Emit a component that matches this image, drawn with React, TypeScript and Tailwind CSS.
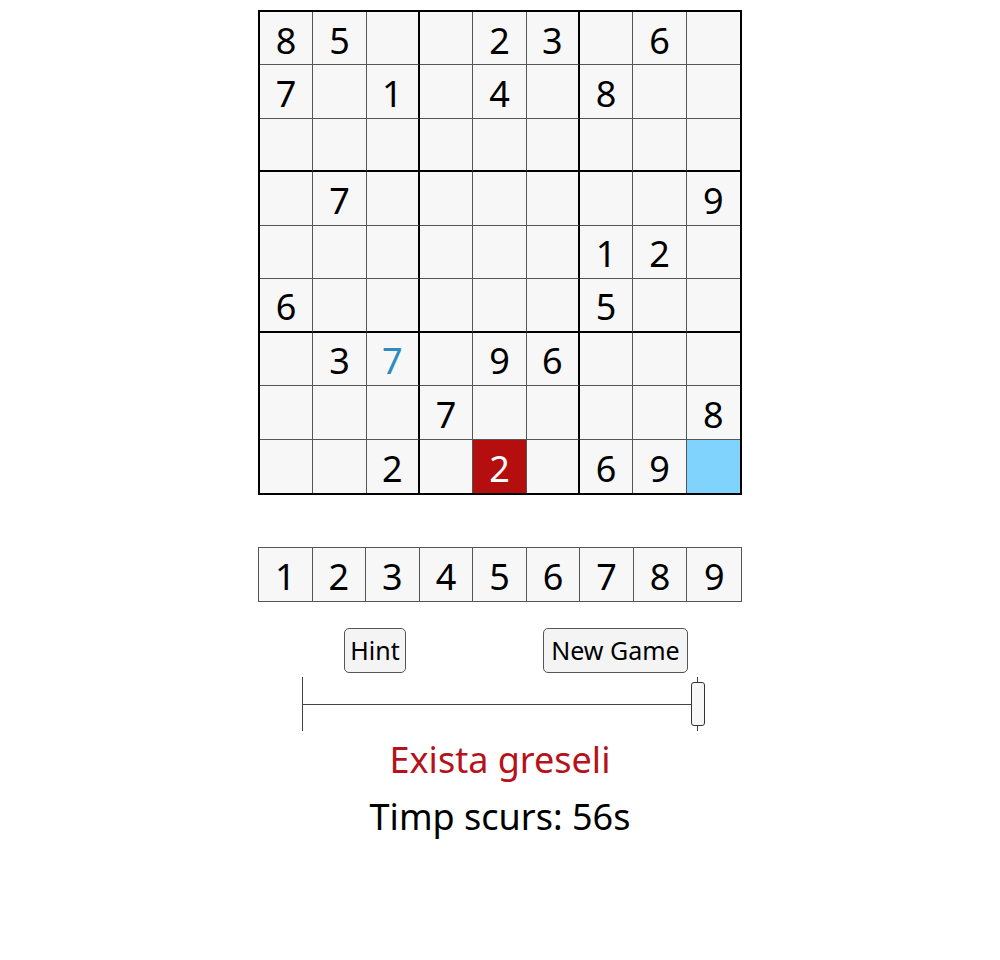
import React from 'react';

type Cell = { v: number | null; kind?: 'given' | 'user' | 'error' | 'selected' };

const rows: (number | null)[][] = [
  [8, 5, null, null, 2, 3, null, 6, null],
  [7, null, 1, null, 4, null, 8, null, null],
  [null, null, null, null, null, null, null, null, null],
  [null, 7, null, null, null, null, null, null, 9],
  [null, null, null, null, null, null, 1, 2, null],
  [6, null, null, null, null, null, 5, null, null],
  [null, 3, 7, null, 9, 6, null, null, null],
  [null, null, null, 7, null, null, null, null, 8],
  [null, null, 2, null, 2, null, 6, 9, null],
];

function cellKind(r: number, c: number): Cell['kind'] {
  if (r === 6 && c === 2) return 'user';
  if (r === 8 && c === 4) return 'error';
  if (r === 8 && c === 8) return 'selected';
  return 'given';
}

function BoardCell({ r, c, v }: { r: number; c: number; v: number | null }) {
  const kind = cellKind(r, c);
  const right = c === 8 ? '' : c === 2 || c === 5 ? 'border-r-2 border-r-black' : 'border-r border-r-[#555]';
  const bottom = r === 8 ? '' : r === 2 || r === 5 ? 'border-b-2 border-b-black' : 'border-b border-b-[#555]';
  const bg = kind === 'error' ? 'bg-[#b50e0e] text-white' : kind === 'selected' ? 'bg-[#7fd3fd]' : 'bg-[#f7f7f7]';
  const color = kind === 'user' ? 'text-[#2e8bbf]' : kind === 'error' ? '' : 'text-black';
  return (
    <div className={`flex items-center justify-center pt-[5px] text-[36px] leading-none ${right} ${bottom} ${bg} ${color}`}>
      {v ?? ''}
    </div>
  );
}

export default function App() {
  return (
    <div className="min-h-[960px] bg-white flex flex-col items-center pt-[10px] font-['Noto_Sans',sans-serif]">
      <div className="w-[484px] h-[485px] border-2 border-black grid grid-cols-9 grid-rows-9">
        {rows.map((row, r) => row.map((v, c) => <BoardCell key={`${r}-${c}`} r={r} c={c} v={v} />))}
      </div>

      <div className="mt-[52px] w-[484px] h-[55px] border border-[#555] grid grid-cols-9 bg-[#f7f7f7]">
        {[1, 2, 3, 4, 5, 6, 7, 8, 9].map((n) => (
          <div key={n} className={`flex items-center justify-center pt-[4px] text-[36px] leading-none text-black ${n < 9 ? 'border-r border-[#555]' : ''}`}>
            {n}
          </div>
        ))}
      </div>

      <div className="mt-[26px] w-[484px] flex pl-[86px]">
        <button className="h-[45px] w-[62px] rounded-[5px] border border-[#555] bg-[#f4f4f4] text-[25px] leading-none text-black">Hint</button>
        <button className="ml-[137px] h-[45px] w-[145px] rounded-[5px] border border-[#555] bg-[#f4f4f4] text-[25px] leading-none text-black">New Game</button>
      </div>

      <div className="mt-[4px] w-[484px] pl-[44px] flex items-center h-[54px]">
        <div className="w-px h-[54px] bg-[#444]" />
        <div className="w-[388px] h-px bg-[#444]" />
        <div className="relative w-[14px] h-[44px]">
          <div className="absolute left-[6px] -top-[5px] w-px h-[54px] bg-[#444]" />
          <div className="absolute inset-0 rounded-[3px] border border-[#333] bg-[#f7f7f7]" />
        </div>
      </div>

      <div className="mt-[3px] text-[36px] leading-[52px] text-[#b5121b]">Exista greseli</div>
      <div className="mt-[5px] text-[36px] leading-[52px] text-black">Timp scurs: 56s</div>
    </div>
  );
}
